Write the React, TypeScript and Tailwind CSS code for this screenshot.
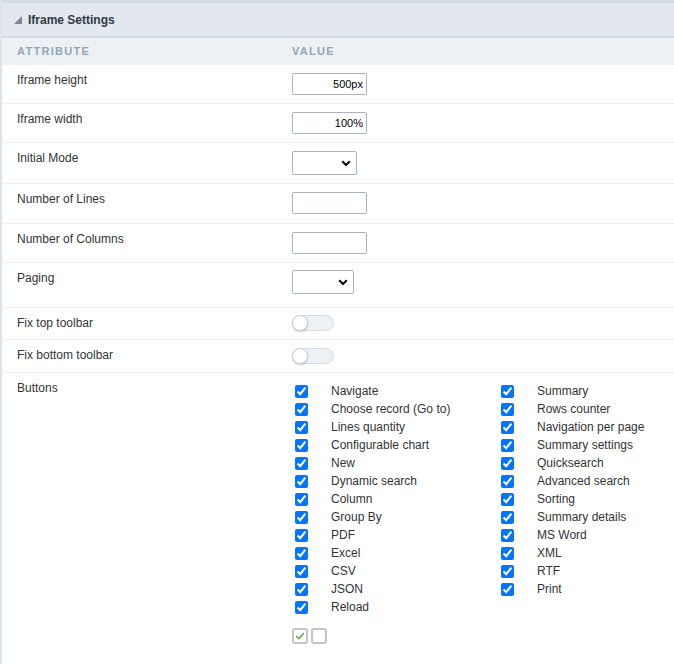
import { ReactNode } from "react";

const leftButtons = [
  "Navigate",
  "Choose record (Go to)",
  "Lines quantity",
  "Configurable chart",
  "New",
  "Dynamic search",
  "Column",
  "Group By",
  "PDF",
  "Excel",
  "CSV",
  "JSON",
  "Reload",
];

const rightButtons = [
  "Summary",
  "Rows counter",
  "Navigation per page",
  "Summary settings",
  "Quicksearch",
  "Advanced search",
  "Sorting",
  "Summary details",
  "MS Word",
  "XML",
  "RTF",
  "Print",
];

function Row({ label, children }: { label: string; children: ReactNode }) {
  return (
    <div className="flex border-b border-[#edf0f3]">
      <div className="w-[290px] shrink-0 pl-[15px] pt-[7px] text-[12px] leading-[16px] text-[#333]">{label}</div>
      <div className="flex-1">{children}</div>
    </div>
  );
}

function TextBox({ value = "" }: { value?: string }) {
  return (
    <input
      type="text"
      defaultValue={value}
      className="block h-[22px] w-[75px] border border-[#aab1ba] rounded-[2px] bg-white px-[3px] text-right text-[11px] text-black outline-none"
    />
  );
}

function Dropdown({ width }: { width: string }) {
  return (
    <div className={`relative h-[24px] ${width} border border-[#aab1ba] rounded-[2px] bg-white`}>
      <svg className="absolute right-[5px] top-[8px]" width="10" height="7" viewBox="0 0 10 7">
        <path d="M1.2 1.2 L5 5 L8.8 1.2" fill="none" stroke="#111" strokeWidth="2.2" />
      </svg>
    </div>
  );
}

function Toggle() {
  return (
    <div className="relative h-[16px] w-[42px] rounded-full border border-[#d6dde4] bg-[#eef1f4]">
      <div className="absolute left-[-1px] top-[-1px] h-[16px] w-[16px] rounded-full border border-[#c9d0d7] bg-white shadow-[0_1px_2px_rgba(0,0,0,0.2)]" />
    </div>
  );
}

function ButtonList({ items }: { items: string[] }) {
  return (
    <div className="flex flex-col">
      {items.map((name) => (
        <label key={name} className="flex h-[18px] items-center text-[12px] text-[#333]">
          <input type="checkbox" defaultChecked className="m-0 ml-[3px] h-[13px] w-[13px]" />
          <span className="ml-[23px]">{name}</span>
        </label>
      ))}
    </div>
  );
}

export default function App() {
  return (
    <div className="min-h-[664px] border-l-2 border-[#dde3ea] bg-white font-['Liberation_Sans',Arial,sans-serif]">
      <div className="flex h-[38px] items-center border-t-[3px] border-b-2 border-[#d3dbe3] bg-[#e2e8ee] pl-[12px]">
        <svg width="8" height="8" viewBox="0 0 8 8" className="mr-[6px] mt-[1px]">
          <path d="M8 0 L8 8 L0 8 Z" fill="#7d8893" />
        </svg>
        <span className="text-[12px] font-bold text-[#2f3a45]">Iframe Settings</span>
      </div>

      <div className="flex h-[27px] items-center bg-[#eef1f4] text-[11px] font-semibold tracking-[1.3px] text-[#90a6b5]">
        <div className="w-[290px] pl-[15px]">ATTRIBUTE</div>
        <div>VALUE</div>
      </div>

      <Row label="Iframe height">
        <div className="py-[8px]">
          <TextBox value="500px" />
        </div>
      </Row>
      <Row label="Iframe width">
        <div className="py-[8px]">
          <TextBox value="100%" />
        </div>
      </Row>
      <Row label="Initial Mode">
        <div className="py-[8px]">
          <Dropdown width="w-[65px]" />
        </div>
      </Row>
      <Row label="Number of Lines">
        <div className="pt-[8px] pb-[9px]">
          <TextBox />
        </div>
      </Row>
      <Row label="Number of Columns">
        <div className="pt-[8px] pb-[8px]">
          <TextBox />
        </div>
      </Row>
      <Row label="Paging">
        <div className="pt-[7px] pb-[13px]">
          <Dropdown width="w-[62px]" />
        </div>
      </Row>
      <Row label="Fix top toolbar">
        <div className="pt-[7px] pb-[8px]">
          <Toggle />
        </div>
      </Row>
      <Row label="Fix bottom toolbar">
        <div className="pt-[8px] pb-[8px]">
          <Toggle />
        </div>
      </Row>

      <div className="flex">
        <div className="w-[290px] shrink-0 pl-[15px] pt-[7px] text-[12px] leading-[16px] text-[#333]">Buttons</div>
        <div className="pt-[9px]">
          <div className="flex">
            <div className="w-[206px]">
              <ButtonList items={leftButtons} />
            </div>
            <ButtonList items={rightButtons} />
          </div>
          <div className="mt-[12px] flex gap-[3px]">
            <div className="flex h-[16px] w-[16px] items-center justify-center rounded-[3px] border-2 border-[#c4c4c4]">
              <svg width="10" height="8" viewBox="0 0 10 8">
                <path d="M1 4 L3.8 6.6 L9 1" fill="none" stroke="#6aa84f" strokeWidth="1.6" />
              </svg>
            </div>
            <div className="h-[16px] w-[16px] rounded-[3px] border-2 border-[#c4c4c4]" />
          </div>
        </div>
      </div>
    </div>
  );
}
